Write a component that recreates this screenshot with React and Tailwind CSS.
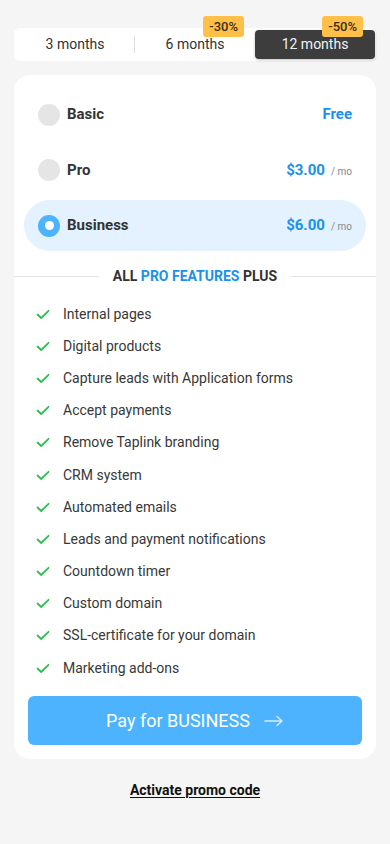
import React from "react";

const features = [
  "Internal pages",
  "Digital products",
  "Capture leads with Application forms",
  "Accept payments",
  "Remove Taplink branding",
  "CRM system",
  "Automated emails",
  "Leads and payment notifications",
  "Countdown timer",
  "Custom domain",
  "SSL-certificate for your domain",
  "Marketing add-ons",
];

function Check() {
  return (
    <svg width="14" height="11" viewBox="0 0 14 11" fill="none" className="shrink-0">
      <path d="M1.5 5.5L5.2 9L12.5 1.8" stroke="#2dbe51" strokeWidth="1.8" strokeLinecap="round" strokeLinejoin="round" />
    </svg>
  );
}

function PlanRow({ name, price, perMonth, active }) {
  return (
    <div
      className={`flex items-center h-[51px] px-[14px] rounded-full ${active ? "bg-[#e3f2fe]" : ""}`}
    >
      {active ? (
        <div className="w-[22px] h-[22px] rounded-full bg-[#4db3ff] flex items-center justify-center">
          <div className="w-[9px] h-[9px] rounded-full bg-white" />
        </div>
      ) : (
        <div className="w-[22px] h-[22px] rounded-full bg-[#e5e5e5]" />
      )}
      <span className="ml-[7px] text-[15px] font-bold text-[#333]">{name}</span>
      <div className="ml-auto flex items-baseline">
        <span className="text-[15px] font-bold text-[#1a91eb]">{price}</span>
        {perMonth && <span className="ml-[6px] text-[10px] text-[#888]">/ mo</span>}
      </div>
    </div>
  );
}

export default function App() {
  return (
    <div
      className="min-h-[844px] bg-[#f5f5f5] px-[14px] pt-[28px]"
      style={{ fontFamily: "Roboto, 'Noto Sans', sans-serif" }}
    >
      {/* Tabs */}
      <div className="relative flex items-center h-[33px] bg-white rounded-[6px] px-[1px]">
        <div className="flex-1 flex items-center justify-center text-[14px] text-[#333] h-full relative">
          3 months
          <div className="absolute right-0 top-[8px] w-px h-[17px] bg-[#ddd]" />
        </div>
        <div className="flex-1 flex items-center justify-center text-[14px] text-[#333] h-full relative">
          6 months
          <span className="absolute right-[11px] -top-[12px] h-[21px] px-[6px] flex items-center rounded-[3px] bg-[#ffc04a] text-[13px] font-medium text-[#3a2e10]">
            -30%
          </span>
        </div>
        <div className="flex-1 flex items-center justify-center text-[14px] text-[#f2f2f2] h-[29px] bg-[#3d3d3d] rounded-[4px] relative shadow-[0_1px_3px_rgba(0,0,0,0.25)]">
          12 months
          <span className="absolute right-[12px] -top-[14px] h-[21px] px-[6px] flex items-center rounded-[3px] bg-[#ffc04a] text-[13px] font-medium text-[#3a2e10]">
            -50%
          </span>
        </div>
      </div>

      {/* Card */}
      <div className="mt-[14px] bg-white rounded-[16px] pt-[14px] pb-[14px] w-[362px]">
        <div className="px-[10px] flex flex-col gap-[4.5px]">
          <PlanRow name="Basic" price="Free" />
          <PlanRow name="Pro" price="$3.00" perMonth />
          <PlanRow name="Business" price="$6.00" perMonth active />
        </div>

        <div className="flex items-center mt-[15px] h-[20px]">
          <div className="flex-1 h-px bg-[#e3e3e3]" />
          <span className="px-[14px] text-[14px] font-bold text-[#333]">
            ALL <span className="text-[#1a91eb]">PRO FEATURES</span> PLUS
          </span>
          <div className="flex-1 h-px bg-[#e3e3e3]" />
        </div>

        <ul className="mt-[12px] px-[22px]">
          {features.map((f) => (
            <li key={f} className="flex items-center h-[32.2px]">
              <Check />
              <span className="ml-[13px] text-[14px] text-[#383838]">{f}</span>
            </li>
          ))}
        </ul>

        <div className="px-[14px] mt-[12px]">
          <button className="w-full h-[49px] rounded-[6px] bg-[#4db3ff] flex items-center justify-center text-white text-[18px]">
            Pay for BUSINESS
            <svg width="20" height="12" viewBox="0 0 20 12" fill="none" className="ml-[14px]">
              <path d="M1 6H18M13 1.5L18 6L13 10.5" stroke="#d8eeff" strokeWidth="1.4" strokeLinecap="round" strokeLinejoin="round" />
            </svg>
          </button>
        </div>
      </div>

      <div className="mt-[19px] text-center">
        <span className="text-[14px] font-bold text-[#111] underline underline-offset-2">Activate promo code</span>
      </div>
    </div>
  );
}
